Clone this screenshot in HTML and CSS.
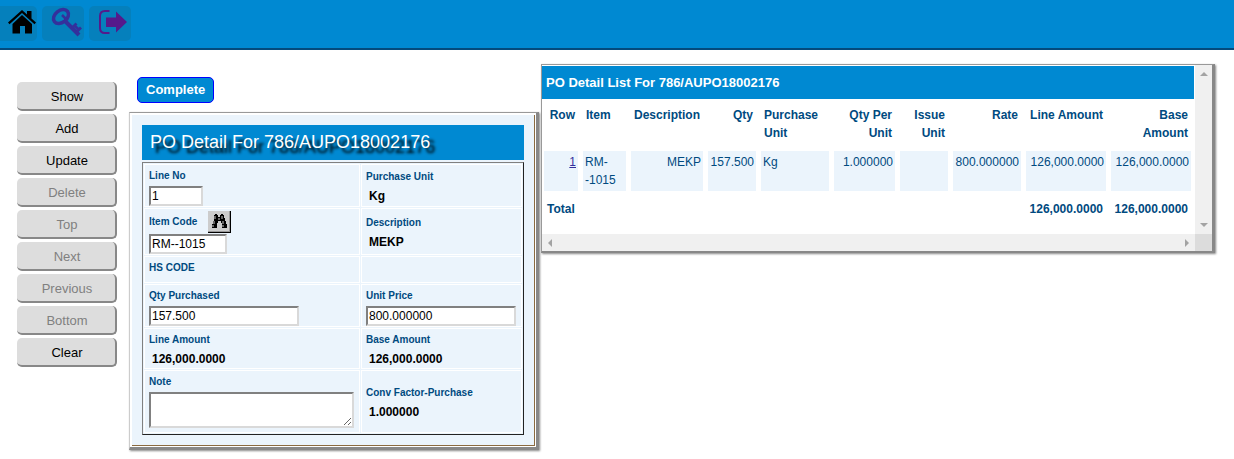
FILE: index.html
```html
<!DOCTYPE html>
<html lang="en">
<head>
<meta charset="utf-8">
<title>PO Detail</title>
<link rel="stylesheet" href="styles.css">
</head>
<body>
<header class="topbar">
  <a class="tile tile-home" href="#" aria-label="Home">
    <svg width="28" height="25" viewBox="0 0 28 25"><path d="M14 0 L19 4.500 V1 H23.500 V8.500 L28 12.500 L26.500 14.200 L14 3 L1.500 14.200 L0 12.500 Z"/><path d="M14 5 L24 14 V23.500 H17 V16 H12 V23.500 H4.500 V14 Z"/></svg>
  </a>
  <a class="tile tile-key" href="#" aria-label="Change password">
    <svg width="32" height="31" viewBox="0 0 32 31" fill="none" stroke="#34309c"><ellipse cx="11" cy="9.500" rx="8.300" ry="6" transform="rotate(-38 11 9.500)" stroke-width="3.500"/><path d="M12 8 L17 13" stroke-width="2.500"/><path d="M14 13 L29 28" stroke-width="4"/><path d="M22 21 L26.500 16.500 M26.500 25 L31 20.500 M24 18 L29 23" stroke-width="2.800"/></svg>
  </a>
  <a class="tile tile-exit" href="#" aria-label="Log out">
    <svg width="28" height="24" viewBox="0 0 28 24"><path d="M10.500 1 H6 Q1 1 1 6 V18 Q1 23 6 23 H10.500" fill="none" stroke="#551a8b" stroke-width="2"/><path d="M7 7.500 H17 V1.500 L28 12 L17 22.500 V17 H7 Z" fill="#551a8b"/></svg>
  </a>
</header>
<main class="page">
  <nav class="actions">
    <button>Show</button>
    <button>Add</button>
    <button>Update</button>
    <button disabled>Delete</button>
    <button disabled>Top</button>
    <button disabled>Next</button>
    <button disabled>Previous</button>
    <button disabled>Bottom</button>
    <button>Clear</button>
  </nav>
  <section class="detail">
    <button class="complete">Complete</button>
    <div class="panel">
      <form class="panel-body">
        <h1>PO Detail For 786/AUPO18002176</h1>
        <div class="fields">
          <div class="cell"><label for="line">Line No</label><input class="tiny" id="line" value="1"></div>
          <div class="cell mid"><span class="label">Purchase Unit</span><b>Kg</b></div>
          <div class="cell"><div class="lookup"><label for="item">Item Code</label><button type="button" aria-label="Find item"><svg width="18" height="16" viewBox="0 0 18 16"><path d="M5 1h2v1h1v2h2V2h1V1h2v1h1v3h1v3h1v3h1v4h-5v-5h-1V8H8v2H7v5H2v-4h1V8h1V5h0V2h1z"/><path d="M5 3v3M4 8v3M3 12v2M12 3v3M13 8v3M13 12v2M9 5v2" stroke="#ccc" fill="none"/></svg></button></div><input class="short" id="item" value="RM--1015"></div>
          <div class="cell mid"><span class="label">Description</span><b>MEKP</b></div>
          <div class="cell slim"><span class="label">HS CODE</span></div>
          <div class="cell"></div>
          <div class="cell"><label for="qty">Qty Purchased</label><input id="qty" value="157.500"></div>
          <div class="cell"><label for="price">Unit Price</label><input id="price" value="800.000000"></div>
          <div class="cell"><span class="label">Line Amount</span><b>126,000.0000</b></div>
          <div class="cell"><span class="label">Base Amount</span><b>126,000.0000</b></div>
          <div class="cell last"><label for="note">Note</label><textarea id="note"></textarea></div>
          <div class="cell mid"><span class="label">Conv Factor-Purchase</span><b>1.000000</b></div>
        </div>
      </form>
    </div>
  </section>
  <section class="list">
    <div class="list-content">
      <h2>PO Detail List For 786/AUPO18002176</h2>
      <table>
        <colgroup><col class="c-row"><col class="c-item"><col class="c-desc"><col class="c-qty"><col class="c-unit"><col class="c-per"><col class="c-qty"><col class="c-unit"><col class="c-line"><col class="c-base"></colgroup>
        <thead><tr><th>Row</th><th class="left">Item</th><th>Description</th><th>Qty</th><th class="left">Purchase Unit</th><th>Qty Per Unit</th><th>Issue Unit</th><th>Rate</th><th>Line Amount</th><th>Base Amount</th></tr></thead>
        <tbody><tr><td><a href="#">1</a></td><td class="left">RM-<br>-1015</td><td>MEKP</td><td>157.500</td><td class="left">Kg</td><td>1.000000</td><td></td><td>800.000000</td><td>126,000.0000</td><td>126,000.0000</td></tr></tbody>
        <tfoot><tr><th class="left" colspan="8">Total</th><th>126,000.0000</th><th>126,000.0000</th></tr></tfoot>
      </table>
    </div>
    <div class="bar bar-v"><i class="up"></i><i class="down"></i></div>
    <div class="bar bar-h"><i class="prev"></i><i class="next"></i></div>
    <div class="corner"></div>
  </section>
</main>
</body>
</html>
```
FILE: styles.css
```css
* { box-sizing: border-box; }
body {
  margin: 0;
  background: #fff;
  color: #000;
  font: 12px/18px "Liberation Sans", Arial, sans-serif;
}
button, input, textarea { font-family: inherit; margin: 0; }
svg { display: block; }

.topbar {
  display: flex;
  gap: 5px;
  height: 50px;
  padding-top: 6px;
  background: #0089d2;
  border-bottom: 2px solid #044a7c;
}
.tile {
  display: flex;
  justify-content: center;
  align-items: center;
  width: 42px;
  height: 35px;
  border-radius: 5px;
  background: #0580bc;
}
.tile-home {
  width: 37px;
  justify-content: flex-end;
  padding: 0 1px 3px 0;
  border-radius: 0 5px 5px 0;
}
.tile-key { padding: 0 0 2px 6px; }
.tile-exit { padding: 0 0 4px 5px; }

.page { display: flex; align-items: flex-start; }

.actions {
  display: flex;
  flex-direction: column;
  gap: 3px;
  width: 100px;
  margin: 32px 12px 0 17px;
}
.actions button {
  height: 29px;
  padding: 2px 0 0 2px;
  border: 0 solid #888;
  border-width: 0 2px 2px 0;
  border-radius: 5px;
  background: #ddd;
  color: #000;
  font-size: 13px;
}
.actions button:disabled { color: #808080; }

.detail { padding: 27px 0 8px; }
.complete {
  display: block;
  height: 26px;
  margin: 0 0 9px 8px;
  padding: 0 8px 2px;
  border: 1px solid #00f;
  border-radius: 5px;
  background: #0089d2;
  color: #fff;
  font-size: 13px;
  font-weight: bold;
}
.panel {
  padding: 2px 1px 1px 2px;
  background: #fff;
  border: 1px solid #888;
  border-color: #999 #888 #888 #ccc;
  border-width: 1px 3px 3px 1px;
  box-shadow: 1px 1px 2px #888;
}
.panel-body {
  padding: 10px;
  background: #ebf4fc;
  border-right: 1px solid #8a6a40;
  border-bottom: 1px solid #8a6a40;
}
h1 {
  margin: 0 0 2px;
  padding: 0 8px;
  background: #0089d2;
  color: #fff;
  font-size: 18px;
  font-weight: normal;
  line-height: 35px;
  text-shadow: 5px 5px 3px #000;
}
.fields {
  display: grid;
  grid-template-columns: 216px 161px;
  gap: 1px;
  padding: 1px;
  border: 1px solid;
  border-color: #808080 #222 #222 #808080;
}
.cell {
  display: flex;
  flex-direction: column;
  align-items: flex-start;
  padding-left: 4px;
  border: 1px solid #fff;
}
.mid { justify-content: center; }
.slim { padding-bottom: 4px; }
.last { padding-bottom: 4px; }
.cell label, .label {
  padding-top: 1px;
  color: #004a80;
  font-size: 10px;
  font-weight: bold;
  line-height: 20px;
}
.cell b { padding-left: 3px; }
.cell input, .cell textarea {
  border: 2px solid;
  border-color: #808080 #d9d9d9 #d9d9d9 #808080;
  background: #fff;
  color: #000;
  font-size: 12px;
}
.cell input { width: 150px; height: 20px; padding: 0 1px; }
.cell .tiny { width: 54px; }
.cell .short { width: 78px; }
.cell textarea { display: block; width: 205px; height: 36px; }
.lookup { display: flex; align-items: center; gap: 11px; height: 25px; }
.lookup button {
  display: flex;
  justify-content: center;
  width: 23px;
  height: 22px;
  padding: 2px 0 0;
  border: 0 solid #000;
  border-width: 0 1px 1px 0;
  background: #ccc;
  box-shadow: inset -1px -1px #999;
}

.list {
  display: grid;
  grid-template-columns: 1fr 17px;
  grid-template-rows: 1fr 17px;
  width: 674px;
  min-height: 189px;
  margin: 14px 0 0 2px;
  background: #fff;
  border: 1px solid #888;
  border-color: #999 #888 #888 #999;
  border-width: 1px 3px 2px 1px;
  box-shadow: 1px 1px 2px #888;
}
.list-content { padding: 1px 1px 0 0; min-width: 0; }
h2 {
  margin: 0;
  padding: 0 4px;
  background: #0089d2;
  color: #fff;
  font-size: 13px;
  line-height: 33px;
}
table {
  width: 647px;
  margin-left: 2px;
  border-collapse: separate;
  border-spacing: 0;
  table-layout: fixed;
  color: #004a80;
}
.c-row { width: 39px; }
.c-item { width: 48px; }
.c-desc { width: 77px; }
.c-qty { width: 53px; }
.c-unit { width: 73px; }
.c-per { width: 66px; }
.c-line { width: 85px; }
.c-base { width: 80px; }
th, td {
  border-right: 5px solid #fff;
  text-align: right;
  vertical-align: top;
}
th:last-child, td:last-child { border-right: 0; }
th { padding: 7px 3px 9px; }
tfoot th { padding-top: 9px; }
td { padding: 2px; background: #ebf4fc; }
.left { text-align: left; }
td a { color: #34309c; }

.bar {
  display: flex;
  justify-content: space-between;
  align-items: center;
  background: #f0f0f0;
}
.bar-v { flex-direction: column; padding: 7px 0; }
.bar-h { padding: 0 6px; }
.corner { background: #dcdcdc; }
.bar i { border: 4px solid transparent; }
.bar .up { border-top: 0; border-bottom-color: #a3a3a3; }
.bar .down { border-bottom: 0; border-top-color: #a3a3a3; }
.bar .prev { border-left: 0; border-right-color: #a3a3a3; }
.bar .next { border-right: 0; border-left-color: #a3a3a3; }
```
